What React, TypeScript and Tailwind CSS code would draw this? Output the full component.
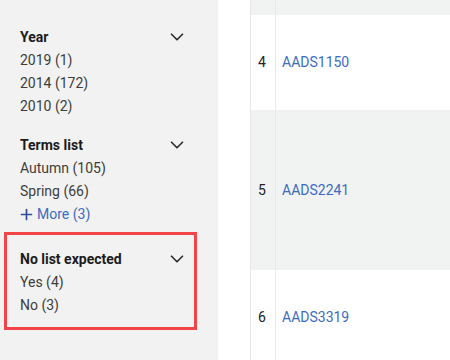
import { ChevronDown, Plus } from 'lucide-react'

type Facet = {
  title: string
  items: string[]
  more?: string
}

const facets: Facet[] = [
  { title: 'Year', items: ['2019 (1)', '2014 (172)', '2010 (2)'] },
  { title: 'Terms list', items: ['Autumn (105)', 'Spring (66)'], more: 'More (3)' },
]

const rows = [
  { n: '', code: '', h: 'h-[15px]', bg: 'bg-[#f1f3f3]' },
  { n: '4', code: 'AADS1150', h: 'h-[95px]', bg: 'bg-white' },
  { n: '5', code: 'AADS2241', h: 'h-[160px]', bg: 'bg-[#f1f3f3]' },
  { n: '6', code: 'AADS3319', h: 'h-[94px]', bg: 'bg-white' },
]

function FacetBlock({ facet }: { facet: Facet }) {
  return (
    <div className="w-[168px]">
      <div className="flex h-6 items-center justify-between">
        <h3 className="text-[14px] font-bold text-[#1b1b1b]">{facet.title}</h3>
        <ChevronDown size={22} strokeWidth={1.8} className="text-[#2b2b2b]" />
      </div>
      {facet.items.map((item) => (
        <p key={item} className="h-[23px] leading-[23px] text-[14px] text-[#3d3d3d]">
          {item}
        </p>
      ))}
      {facet.more && (
        <p className="flex h-[23px] items-center gap-[2px] text-[14px] text-[#3d6cbf]">
          <Plus size={17} strokeWidth={2.4} className="-ml-[2px] text-[#2f4f9a]" />
          {facet.more}
        </p>
      )}
    </div>
  )
}

export default function App() {
  return (
    <div
      className="flex h-[360px] w-[450px] overflow-hidden bg-white"
      style={{ fontFamily: 'Roboto, "Liberation Sans", sans-serif' }}
    >
      <aside className="w-[218px] shrink-0 bg-[#f2f2f2] pl-5 pt-[25px]">
        <div className="space-y-[15px]">
          {facets.map((f) => (
            <FacetBlock key={f.title} facet={f} />
          ))}
        </div>
        <div className="-ml-4 mt-[6px] w-[193px] border-[3px] border-[#f2454a] pb-[10px] pl-[13px] pt-[12px]">
          <FacetBlock facet={{ title: 'No list expected', items: ['Yes (4)', 'No (3)'] }} />
        </div>
      </aside>

      <div className="w-8 shrink-0 bg-white" />

      <div className="flex-1 border-l border-[#e6e6e6]">
        {rows.map((r, i) => (
          <div key={i} className={`flex ${r.h} ${r.bg}`}>
            <div className="flex w-[25px] shrink-0 items-center border-r border-[#e8e8e8] pl-[7px] text-[14px] text-[#222]">
              {r.n}
            </div>
            <div className="flex items-center pl-[6px] text-[14px] text-[#3d6cbf]">
              {r.code}
            </div>
          </div>
        ))}
      </div>
    </div>
  )
}
